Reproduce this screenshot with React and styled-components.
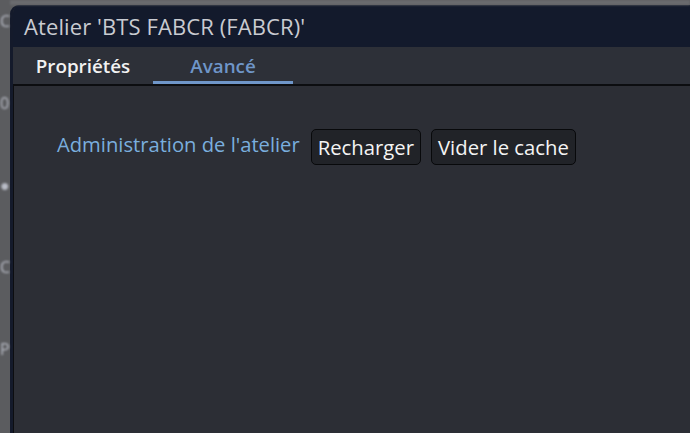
import styled, { createGlobalStyle } from "styled-components";

const GlobalStyle = createGlobalStyle`
  html, body {
    margin: 0;
    padding: 0;
    background: #5b5c5f;
    overflow: hidden;
  }
  body {
    font-family: "Open Sans", "Noto Sans", sans-serif;
  }
`;

const Screen = styled.div`
  width: 690px;
  height: 433px;
  display: grid;
  grid-template-columns: 10px 1fr;
  grid-template-rows: 5px 1fr;
  background: #5b5c5f;
  overflow: hidden;
`;

/* blurred app behind the dialog */
const Backdrop = styled.div`
  grid-row: 1 / 3;
  grid-column: 1;
  display: flex;
  flex-direction: column;
  gap: 60px;
  padding-top: 10px;
  color: #b9bcc6;
  font-size: 16px;
  filter: blur(1px);
  overflow: hidden;
  white-space: nowrap;
`;

const BackdropTop = styled.div`
  grid-row: 1;
  grid-column: 2;
  background: #6a6b6e;
  filter: blur(1px);
`;

const Dialog = styled.div`
  grid-row: 2;
  grid-column: 2;
  display: flex;
  flex-direction: column;
  background: #2c2e35;
  border-left: 3px solid #141a2b;
  border-top-left-radius: 9px;
  overflow: hidden;
`;

const TitleBar = styled.div`
  height: 42px;
  display: flex;
  align-items: center;
  padding-left: 11px;
  background: #131a2c;
  color: #c9cbd1;
  font-size: 22px;
  letter-spacing: 0.1px;
`;

const Tabs = styled.div`
  height: 37px;
  display: flex;
  background: #2d3038;
  border-bottom: 2px solid #0c0d10;
`;

const Tab = styled.div`
  width: ${(p) => p.$width}px;
  display: flex;
  align-items: center;
  justify-content: center;
  font-size: 18.8px;
  font-weight: 600;
  color: ${(p) => (p.$active ? "#6f96c9" : "#f2f2f2")};
  border-bottom: 3px solid ${(p) => (p.$active ? "#6f96c9" : "transparent")};
  padding-top: 3px;
  box-sizing: border-box;
`;

const Body = styled.div`
  flex: 1;
  display: flex;
  align-items: flex-start;
  gap: 10px;
  padding: 43px 0 0 43px;
  border-left: 1px solid #0c0d10;
`;

const Label = styled.div`
  color: #7aaede;
  font-size: 20.2px;
  margin-top: 1px;
  margin-right: 1px;
`;

const Button = styled.button`
  height: 36px;
  padding: 0 6px;
  background: #212328;
  border: 1px solid #08090b;
  border-radius: 5px;
  color: #f4f4f4;
  font-family: inherit;
  font-size: 20.3px;
  font-weight: 500;
  cursor: pointer;
`;

export default function App() {
  return (
    <>
      <GlobalStyle />
      <Screen>
        <Backdrop>
          <span>C</span>
          <span>0</span>
          <span>●</span>
          <span>C</span>
          <span>P</span>
        </Backdrop>
        <BackdropTop />
        <Dialog>
          <TitleBar>Atelier 'BTS FABCR (FABCR)'</TitleBar>
          <Tabs>
            <Tab $width={140}>Propriétés</Tab>
            <Tab $width={140} $active>
              Avancé
            </Tab>
          </Tabs>
          <Body>
            <Label>Administration de l'atelier</Label>
            <Button>Recharger</Button>
            <Button>Vider le cache</Button>
          </Body>
        </Dialog>
      </Screen>
    </>
  );
}
